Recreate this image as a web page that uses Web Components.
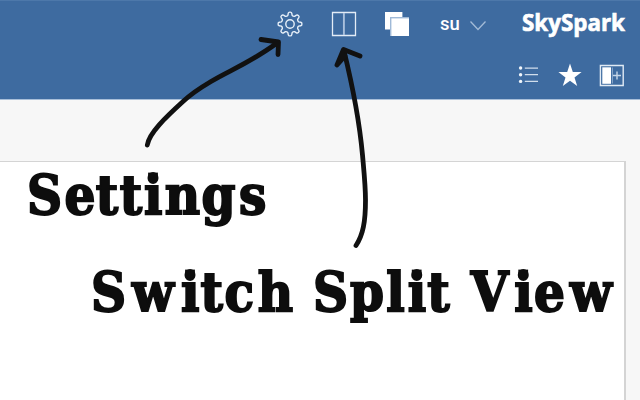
<!DOCTYPE html>
<html lang="en"><head><meta charset="utf-8"><title>SkySpark</title>
<style>html,body{margin:0;height:100%;overflow:hidden}</style></head>
<body>
<spark-app></spark-app>
<script>
class Base extends HTMLElement{
  constructor(){super();this.attachShadow({mode:'open'}).innerHTML=this.render();}
}
customElements.define('spark-icon',class extends HTMLElement{
  connectedCallback(){
    const root=this.attachShadow({mode:'open'}),n=this.getAttribute('name');
    const g={
      gear:[26,26,()=>`<path d="${this.gear()}" fill="none" stroke="#e6eff8" stroke-width="1.4" stroke-linejoin="round"/><circle cx="13" cy="13" r="4.2" fill="none" stroke="#e6eff8" stroke-width="1.4"/>`],
      split:[26,26,()=>`<path d="M1.5 1.5H24.5V24.5H1.5Z" fill="none" stroke="#e3ecf6" stroke-width="1.3"/><path d="M12.9 2V24" stroke="#a9c0dc" stroke-width="1.9"/>`],
      windows:[26,26,()=>`<path d="M1 1H18.4V18.5H1Z" fill="#fff"/><path d="M6 6H25V25H6Z" fill="#9fb9d7"/><path d="M7.4 7.4H25V25H7.4Z" fill="#fff"/>`],
      chevron:[18,12,()=>`<path d="M1.5 1.5L9 9.5L16.5 1.5" fill="none" stroke="#a3bbd7" stroke-width="1.3"/>`],
      list:[22,20,()=>`<g fill="#f1f6fb"><circle cx="2.6" cy="3" r="1.7"/><circle cx="2.6" cy="9.8" r="1.7"/><circle cx="2.6" cy="16.4" r="1.7"/></g><path d="M6.8 3.2H20M6.8 9.7H20M6.8 16.4H20" stroke="#d1deec" stroke-width="1.3"/>`],
      star:[24,24,()=>`<path d="M12 0.5L14.8 9.1H23.6L16.5 14.4L19.2 23L12 17.8L4.8 23L7.5 14.4L0.4 9.1H9.2Z" fill="#fff"/>`],
      panel:[26,23,()=>`<path d="M1.4 1.5H24.2V21.5H1.4Z" fill="none" stroke="#e0eaf4" stroke-width="1.4"/><path d="M3.3 3.3H12V19.8H3.3Z" fill="#fff"/><path d="M13.4 3.5V19.5" stroke="#8caacd"/><path d="M14 11.5H22M18 7.5V15.5" stroke="#c6d6e8" stroke-width="1.4"/>`]
    }[n];
    root.innerHTML=`<style>:host{display:block;line-height:0}svg{display:block}</style><svg width="${g[0]}" height="${g[1]}" viewBox="0 0 ${g[0]} ${g[1]}">${g[2]()}</svg>`;
  }
  /* Eight-toothed cog outline centred on 13,13. */
  gear(){
    const p=(r,a)=>{a=a*Math.PI/180;return (13+r*Math.sin(a)).toFixed(2)+' '+(13-r*Math.cos(a)).toFixed(2)};
    let d='';
    for(let i=0;i<8;i++){const a=i*45;
      d+=(i?'L':'M')+p(8.9,a-14)+'L'+p(10.9,a-9)+'Q'+p(12.1,a-7)+' '+p(11.9,a)+'Q'+p(12.1,a+7)+' '+p(10.9,a+9)+'L'+p(8.9,a+14)+'Q'+p(8,a+22.5)+' '+p(8.9,a+31);
    }
    return d+'Z';
  }
});
customElements.define('spark-header',class extends Base{render(){return `
<style>:host{display:block;box-sizing:border-box;height:100px;background:#3e6ba0;border-top:1px solid #4d78aa;border-bottom:1px solid #a9bfd9;color:#fff}
.row{display:flex;align-items:center;justify-content:flex-end}
.top{height:45px;padding-right:15px}.tools{height:58px;padding-right:15px}
.user{font:500 18.5px/24px Roboto,sans-serif;margin:1px 9px 0 30px;width:20px}
.brand{font:700 24px/28px "Open Sans","Noto Sans",sans-serif;margin:-2px 0 0 34px;width:104px;white-space:nowrap}
.brand svg{display:block;overflow:visible}</style>
<div class="row top"><spark-icon name="gear" style="margin-right:28px"></spark-icon><spark-icon name="split" style="margin-right:27px"></spark-icon><spark-icon name="windows"></spark-icon><span class="user">su</span><spark-icon name="chevron" style="margin-top:4px"></spark-icon>
<div class="brand"><svg width="104" height="28"><text x="1" y="22" fill="#fff" stroke="#fff" stroke-width=".7" textLength="103" lengthAdjust="spacingAndGlyphs">SkySpark</text></svg></div></div>
<div class="row tools"><spark-icon name="list" style="margin-right:18px"></spark-icon><spark-icon name="star" style="margin-right:17px"></spark-icon><spark-icon name="panel"></spark-icon></div>`}});
/* A widely tracked slab word: "centers" holds the middle of each letter, and the i gets a square dot. */
customElements.define('slab-word',class extends HTMLElement{
  connectedCallback(){
    const w=this.getAttribute('width'),t=this.getAttribute('text'),c=this.getAttribute('centers').split(' ').map(Number),k=t.indexOf('i');
    this.attachShadow({mode:'open'}).innerHTML=`<style>:host{display:block;height:64px}svg{display:block;overflow:visible}
text{font:bold 54px "DejaVu Serif Condensed","DejaVu Serif",serif;font-stretch:condensed;fill:#0d0d0d;stroke:#0d0d0d;stroke-width:1.9px;text-anchor:middle}rect{fill:#0d0d0d}</style>
<svg width="${w}" height="64"><text x="${c.join(' ')}" y="47.4">${t}</text><rect x="${c[k]-5.2}" y="5.6" width="9.8" height="8"/></svg>`;
  }
});
customElements.define('callout-arrows',class extends Base{render(){return `
<style>:host{position:absolute;inset:0;pointer-events:none}svg{display:block;filter:blur(.45px)}</style>
<svg width="640" height="400" fill="none" stroke="#111" stroke-width="4.8" stroke-linecap="round" stroke-linejoin="round">
<path d="M147.3 145C149 133 166 117 183 101.5C191 94 200 88 211 81.5C228 71 250 63 277 43M261 39.5L278.5 42L278 54.5"/>
<path d="M356 245.5C363 235 365.5 222 365.5 200C365.5 186 364 172 362.5 155C360.5 133 356 100 344 51"/><path d="M360 56L343.5 49.5L337 65L345 56"/></svg>`}});
customElements.define('spark-app',class extends Base{render(){return `
<style>:host{display:block;position:relative;width:640px;height:400px;background:#f7f7f7;overflow:hidden}
main{box-sizing:border-box;margin-top:61px;width:626px;height:239px;background:#fff;border:solid #d4d4d4;border-width:1px 2px 0 0}
.one{padding:5px 0 0 26px}.two{display:flex;padding:33px 0 0 90px;gap:17px}</style>
<spark-header></spark-header>
<main><div class="one"><slab-word text="Settings" width="241" centers="18.5 54 81 105 127.3 156.5 192.5 226.7"></slab-word></div>
<div class="two"><slab-word text="Switch" width="206" centers="18.5 63 100.3 121.8 149.3 185.5"></slab-word><slab-word text="Split" width="137" centers="17.5 54 82.5 104 125.5"></slab-word><slab-word text="View" width="148" centers="22.5 56.5 82.5 124"></slab-word></div></main>
<callout-arrows></callout-arrows>`}});
</script></body></html>
